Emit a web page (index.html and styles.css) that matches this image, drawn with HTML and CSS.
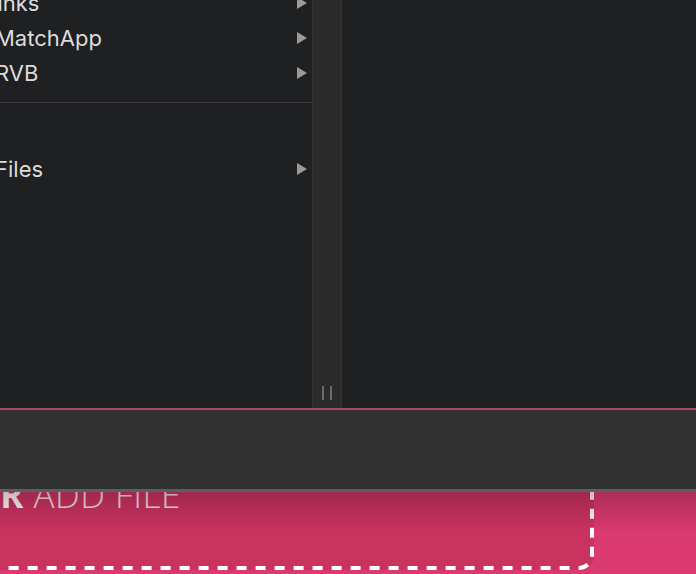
FILE: index.html
```
<!DOCTYPE html>
<html>
<head>
<meta charset="utf-8">
<link rel="stylesheet" href="styles.css">
</head>
<body>
<div class="browser">
  <div class="col-list">
    <ul class="list">
      <li class="row"><span class="label label-first">Links</span><svg class="arrow" viewBox="0 0 10 12"><path d="M0 0L10 6L0 12Z"/></svg></li>
      <li class="row"><span class="label">MatchApp</span><svg class="arrow" viewBox="0 0 10 12"><path d="M0 0L10 6L0 12Z"/></svg></li>
      <li class="row"><span class="label">RVB</span><svg class="arrow" viewBox="0 0 10 12"><path d="M0 0L10 6L0 12Z"/></svg></li>
    </ul>
    <div class="sep"></div>
    <ul class="list list-2">
      <li class="row"><span class="label">Files</span><svg class="arrow" viewBox="0 0 10 12"><path d="M0 0L10 6L0 12Z"/></svg></li>
    </ul>
  </div>
  <div class="divider">
    <div class="grip"><span></span><span></span></div>
  </div>
  <div class="pane"></div>
</div>
<div class="accent"></div>
<div class="bar"></div>
<div class="drop">
  <div class="dropbox">
    <svg class="dash" width="614" height="118" viewBox="0 0 614 118"><rect x="2" y="2" width="610" height="114" rx="13" ry="13" fill="none" stroke="#ffffff" stroke-width="4" stroke-dasharray="10 9"/></svg>
    <p class="droptext"><b>OR</b> ADD FILE</p>
  </div>
</div>
</body>
</html>
```
FILE: styles.css
```
html, body {
  margin: 0;
  padding: 0;
  width: 696px;
  height: 574px;
  overflow: hidden;
  background: #1f2022;
}
.browser {
  display: flex;
  height: 408px;
  background: #1f2022;
}
.col-list {
  width: 312px;
  overflow: hidden;
}
.list {
  list-style: none;
  margin: 0;
  padding: 0;
}
.list:first-child {
  margin-top: -15px;
}
.row {
  display: flex;
  align-items: center;
  justify-content: space-between;
  height: 35px;
  padding-right: 5px;
}
.label {
  font-family: Inter, "Noto Sans", sans-serif;
  font-size: 22px;
  color: #dcdcdc;
  margin-left: -5px;
}
.label-first {
  margin-left: -15px;
}
.arrow {
  width: 10px;
  height: 12px;
  fill: #9b9b9b;
}
.sep {
  margin-top: 12px;
  height: 1px;
  background: #3a3a3c;
}
.list-2 {
  margin-top: 48px;
}
.divider {
  width: 28px;
  background: #2b2b2b;
  border-left: 1px solid #353535;
  border-right: 1px solid #353535;
  display: flex;
  flex-direction: column;
  justify-content: flex-end;
  align-items: center;
}
.grip {
  display: flex;
  gap: 6px;
  margin-bottom: 8px;
  margin-right: 1px;
}
.grip span {
  width: 2px;
  height: 14px;
  background: #6b6b6b;
}
.pane {
  flex: 1;
}
.accent {
  height: 2px;
  background: #a3486b;
}
.bar {
  height: 79px;
  background: #313131;
  border-bottom: 3px solid #5e5e5e;
}
.drop {
  position: relative;
  height: 82px;
  overflow: hidden;
  background: #da3a6f;
}
.drop::after {
  content: "";
  position: absolute;
  left: 0;
  top: 0;
  right: 0;
  height: 40px;
  background: linear-gradient(rgba(60, 10, 30, 0.28), rgba(60, 10, 30, 0));
  pointer-events: none;
}
.dropbox {
  position: relative;
  margin-top: -40px;
  margin-left: -20px;
  width: 614px;
  height: 118px;
  background: #ca3360;
  border-radius: 0 0 14px 0;
}
.dash {
  position: absolute;
  left: 0;
  top: 0;
}
.droptext {
  position: relative;
  margin: 0;
  padding-top: 25px;
  font-family: "Open Sans", "Noto Sans", sans-serif;
  font-weight: 300;
  font-size: 35px;
  line-height: 36px;
  letter-spacing: 0.5px;
  color: #f3e8ec;
  text-indent: -8px;
}
.droptext b {
  font-weight: 700;
  color: #ffffff;
}
```
